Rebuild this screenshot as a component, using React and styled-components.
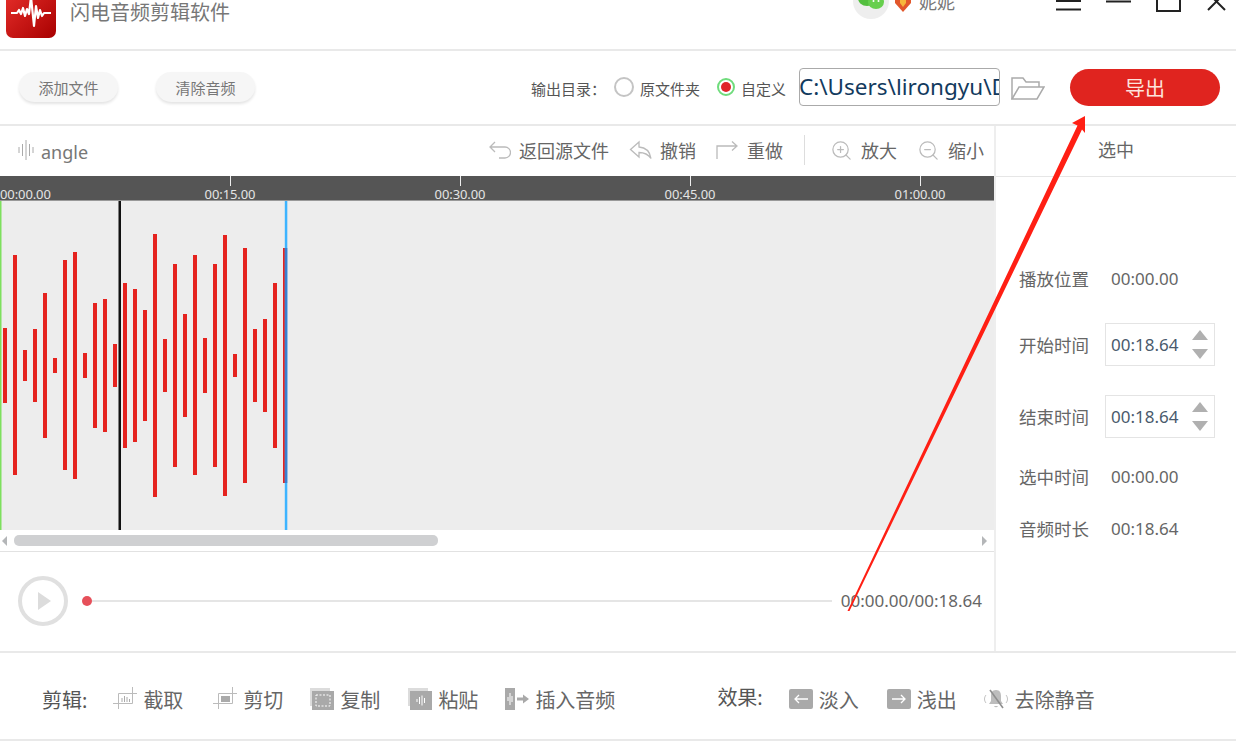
import React from 'react';
import styled, { createGlobalStyle } from 'styled-components';
import { ZoomIn, ZoomOut } from 'lucide-react';

const GlobalStyle = createGlobalStyle`
  html, body { margin: 0; padding: 0; background: #fff; }
  * { box-sizing: border-box; }
`;

const Page = styled.div`
  position: relative;
  width: 1236px;
  height: 742px;
  overflow: hidden;
  background: #fff;
  color: #666;
  font-family: "Noto Sans", "Noto Sans CJK SC", sans-serif;
`;

/* title bar */
const TitleBar = styled.header`
  display: flex;
  height: 51px;
  padding-left: 6px;
  border-bottom: 2px solid #e9e9e9;
  overflow: hidden;
`;
const Logo = styled.svg`
  flex: none;
  width: 50px;
  height: 50px;
  margin-top: -12px;
`;
const AppName = styled.div`
  margin-left: 14px;
  font-size: 20px;
  line-height: 26px;
  color: #777;
`;
const Avatar = styled.div`
  display: flex;
  align-items: flex-end;
  justify-content: center;
  flex: none;
  width: 36px;
  height: 36px;
  margin: -17px 0 0 auto;
  padding-bottom: 9px;
  border-radius: 50%;
  background: #eee;
`;
const UserName = styled.div`
  margin: -10px 0 0 7px;
  font-size: 18px;
  line-height: 24px;
  color: #777;
`;
const WindowControls = styled.div`
  display: flex;
  align-items: flex-start;
  gap: 25px;
  margin-left: 101px;
  padding-right: 9px;
`;
const Badge = styled.svg`
  flex: none;
  width: 18px;
  height: 12px;
  margin-left: 5px;
`;

/* toolbar */
const Toolbar = styled.section`
  display: flex;
  align-items: center;
  height: 75px;
  padding: 0 16px 1px 19px;
  border-bottom: 2px solid #e9e9e9;
`;
const PillButton = styled.button`
  width: 99px;
  height: 30px;
  margin-right: 38px;
  border: 0;
  border-radius: 15px;
  background: #f6f6f6;
  box-shadow: 0 2px 3px #e4e4e4;
  color: #777;
  font: inherit;
  font-size: 15px;
  padding: 0;
`;
const OutputGroup = styled.div`
  display: flex;
  align-items: center;
  margin-left: auto;
`;
const OutputLabel = styled.span`
  margin: 2px 8px 0 0;
  font-size: 15px;
  color: #555;
`;
const Radio = styled.span`
  display: flex;
  align-items: center;
  justify-content: center;
  flex: none;
  width: ${(p) => (p.$checked ? 18 : 20)}px;
  height: ${(p) => (p.$checked ? 18 : 20)}px;
  margin-right: 6px;
  border-radius: 50%;
  border: 2px solid ${(p) => (p.$checked ? '#6fdc7c' : '#c4c4c4')};
  &::after {
    content: '';
    display: ${(p) => (p.$checked ? 'block' : 'none')};
    width: 10px;
    height: 10px;
    border-radius: 50%;
    background: #e0242a;
  }
`;
const RadioLabel = styled.span`
  margin: 3px ${(p) => p.$gap}px 0 0;
  font-size: 15px;
  color: #555;
`;
const PathField = styled.div`
  width: 201px;
  height: 38px;
  border: 1px solid #aaa;
  border-radius: 4px;
  overflow: hidden;
  white-space: nowrap;
  text-indent: -1px;
  font-size: 22.5px;
  line-height: 36px;
  color: #123a5e;
`;
const FolderIcon = styled.svg`
  flex: none;
  width: 34px;
  height: 24px;
  margin: 2px 25px 0 11px;
`;
const ExportButton = styled.button`
  width: 150px;
  height: 37px;
  margin-top: 1px;
  border: 0;
  padding: 0;
  border-radius: 19px;
  background: #e0241f;
  color: #fde3dc;
  font: inherit;
  font-size: 20px;
`;

/* main */
const Main = styled.main`
  display: grid;
  grid-template-columns: 994px 1fr;
  height: 527px;
  border-bottom: 2px solid #e9e9e9;
`;
const Editor = styled.div`
  display: flex;
  flex-direction: column;
  min-width: 0;
`;
const EditorBar = styled.div`
  display: flex;
  align-items: center;
  height: 50px;
  padding: 0 10px 2px 18px;
`;
const TrackName = styled.span`
  margin: 4px 0 0 6px;
  font-size: 18px;
  color: #777;
`;
const EditorActions = styled.div`
  display: flex;
  align-items: center;
  gap: 20px;
  margin-left: auto;
`;
const EditorAction = styled.span`
  display: flex;
  align-items: center;
  gap: 8px;
  font-size: 18px;
  color: #666;
  white-space: nowrap;
  svg { flex: none; }
`;
const Divider = styled.span`
  width: 1px;
  height: 30px;
  margin: 0 5px 0 1px;
  background: #ddd;
`;

const Ruler = styled.div`
  display: flex;
  flex: none;
  height: 25px;
  background: #555;
  border-bottom: 1px solid #999;
  overflow: hidden;
`;
const RulerCell = styled.div`
  position: relative;
  flex: 0 0 ${(p) => (p.$first ? 115 : 230)}px;
  padding-top: 10px;
  text-align: ${(p) => (p.$first ? 'left' : 'center')};
  font-size: 13px;
  line-height: 17px;
  letter-spacing: -0.1px;
  color: #e4e4e4;
  &::before {
    content: '';
    display: ${(p) => (p.$first ? 'none' : 'block')};
    position: absolute;
    top: 0;
    left: 50%;
    width: 1px;
    height: 10px;
    background: #eee;
  }
`;
const Wave = styled.svg`
  display: block;
  flex: none;
  width: 994px;
  height: 329px;
  background: #ededed;
`;
const ScrollStrip = styled.div`
  display: flex;
  align-items: center;
  flex: none;
  height: 22px;
  padding: 0 7px 0 2px;
  border-bottom: 1px solid #e2e2e2;
`;
const ScrollArrow = styled.span`
  flex: none;
  width: 0;
  height: 0;
  border-top: 5px solid transparent;
  border-bottom: 5px solid transparent;
  ${(p) => (p.$dir === 'left' ? 'border-right: 5px solid #b4b6b8;' : 'border-left: 5px solid #b4b6b8; margin-left: auto;')}
`;
const ScrollThumb = styled.span`
  width: 424px;
  height: 11px;
  margin-left: 7px;
  border-radius: 5px;
  background: #cfd0d2;
`;
const Player = styled.div`
  display: flex;
  align-items: center;
  flex: 1;
  padding: 0 12px 2px 18px;
`;
const PlayButton = styled.span`
  display: flex;
  align-items: center;
  justify-content: center;
  flex: none;
  width: 50px;
  height: 50px;
  border: 4px solid #e0e0e0;
  border-radius: 50%;
  &::after {
    content: '';
    margin-left: 3px;
    border-left: 13px solid #dcdcdc;
    border-top: 9px solid transparent;
    border-bottom: 9px solid transparent;
  }
`;
const SeekDot = styled.span`
  flex: none;
  width: 10px;
  height: 10px;
  margin-left: 14px;
  border-radius: 50%;
  background: #e6505a;
`;
const SeekTrack = styled.span`
  flex: 1;
  height: 2px;
  background: #e5e5e5;
`;
const TimeText = styled.span`
  margin-left: 9px;
  font-size: 17px;
  color: #666;
  white-space: nowrap;
`;

/* side panel */
const Side = styled.aside`
  border-left: 2px solid #eee;
`;
const SideHead = styled.div`
  display: flex;
  align-items: center;
  justify-content: center;
  height: 51px;
  padding-bottom: 4px;
  border-bottom: 1px solid #e6e6e6;
  font-size: 18px;
  color: #666;
`;
const SideBody = styled.div`
  display: flex;
  flex-direction: column;
  padding: 81px 0 0 23px;
`;
const SideRow = styled.div`
  display: flex;
  align-items: center;
  height: ${(p) => p.$h}px;
  margin-top: ${(p) => p.$mt || 0}px;
`;
const SideLabel = styled.span`
  flex: 0 0 86px;
  font-size: 17.5px;
  color: #666;
`;
const SideValue = styled.span`
  padding-left: 6px;
  font-size: 17px;
  color: #666;
`;
const Stepper = styled.div`
  display: flex;
  align-items: center;
  width: 110px;
  height: 100%;
  padding: 0 6px 0 5px;
  border: 1px solid #e4e4e4;
  font-size: 17px;
  color: #4a5a6c;
`;
const StepArrows = styled.span`
  display: flex;
  flex-direction: column;
  gap: 9px;
  margin-left: auto;
`;
const StepArrow = styled.span`
  width: 0;
  height: 0;
  border-left: 8px solid transparent;
  border-right: 8px solid transparent;
  ${(p) => (p.$up ? 'border-bottom: 10px solid #b0b0b0;' : 'border-top: 10px solid #b0b0b0;')}
`;

/* bottom bar */
const EditBar = styled.footer`
  display: flex;
  align-items: center;
  height: 88px;
  padding: 6px 0 0 42px;
  border-bottom: 2px solid #e9e9e9;
  gap: 28px;
  font-size: 20px;
  color: #666;
`;
const EditLabel = styled.span`
  margin-left: ${(p) => p.$ml || 0}px;
  margin-right: -2px;
  margin-bottom: ${(p) => p.$up || 0}px;
  color: #555;
  white-space: nowrap;
`;
const EditItem = styled.span`
  display: flex;
  align-items: center;
  gap: 6px;
  margin-left: ${(p) => p.$ml || 0}px;
  white-space: nowrap;
  svg { flex: none; }
`;
const ArrowOverlay = styled.svg`
  position: absolute;
  inset: 0;
  width: 1236px;
  height: 742px;
  pointer-events: none;
`;

const Icon = ({ w = 24, h = 24, children }) => (
  <svg width={w} height={h} viewBox={`0 0 ${w} ${h}`} fill="none">{children}</svg>
);

const bars = [
  [328, 403], [255, 475], [350, 381], [329, 402], [293, 438], [358, 373], [260, 470], [252, 479],
  [353, 378], [303, 428], [299, 432], [344, 387], [283, 448], [289, 442], [310, 421], [234, 497],
  [339, 392], [264, 467], [314, 417], [255, 475], [338, 393], [264, 467], [235, 496], [354, 377],
  [248, 483], [329, 402], [319, 412], [283, 448], [248, 483],
];

const Waveform = () => (
  <Wave viewBox="0 0 994 329">
    {bars.map(([top, bottom], i) => (
      <rect key={i} x={3 + i * 10} y={top - 201} width="4" height={bottom - top} fill="#e5231f" />
    ))}
    <rect x="0" y="0" width="1.5" height="329" fill="#7ee05e" />
    <rect x="118.5" y="0" width="2.5" height="329" fill="#111" />
    <rect x="284.8" y="0" width="2.5" height="329" fill="#3db4ff" />
    <rect x="284.8" y="47" width="2.5" height="235" fill="#3a80cf" />
  </Wave>
);

const CropIcon = ({ filled }) => (
  <Icon>
    <path d="M0 16.500H19.500V0M5.500 22V6.500H24" stroke="#bbb" />
    {filled
      ? <rect x="8" y="9" width="9" height="6" fill="#aaa" />
      : <path d="M9 15v-4M11.500 15v-6M14 15v-5M16.500 15v-3" stroke="#aaa" />}
  </Icon>
);

const CopyIcon = () => (
  <Icon>
    <rect x="0" y="1" width="20" height="18" fill="#dcdcdc" />
    <rect x="2" y="4" width="22" height="19" fill="#a9a9a9" />
    <rect x="6" y="8" width="14" height="11" stroke="#fff" strokeDasharray="2 1.5" />
  </Icon>
);

const PasteIcon = () => (
  <Icon>
    <rect x="0" y="1" width="20" height="18" fill="#dcdcdc" />
    <rect x="2" y="4" width="22" height="19" fill="#a9a9a9" />
    <path d="M9 12v3M11.500 10v7M14 8.500v10M16.500 11v5" stroke="#fff" />
  </Icon>
);

const InsertIcon = () => (
  <Icon>
    <rect x="0" y="1" width="10" height="22" fill="#a9a9a9" />
    <path d="M3 10v4M5 6v12M7 9v6" stroke="#fff" />
    <path d="M12 12h7" stroke="#a9a9a9" strokeWidth="3" />
    <path d="M18 7.500l6 4.500-6 4.500z" fill="#a9a9a9" />
  </Icon>
);

const FadeIcon = ({ dir }) => (
  <Icon>
    <rect x="0" y="2" width="24" height="20" rx="2" fill="#a9a9a9" />
    <path d={dir === 'in' ? 'M19 12H6M10 8l-4 4 4 4' : 'M5 12h13M14 8l4 4-4 4'} stroke="#fff" strokeWidth="1.3" />
  </Icon>
);

const MuteIcon = () => (
  <Icon w={26}>
    <path d="M13 3c-4 0-5 3-5 6v5l-2 3h14l-2-3V9c0-3-1-6-5-6z" fill="#bdbdbd" />
    <path d="M11 19a2.200 2.200 0 0 0 4 0z" fill="#bdbdbd" />
    <path d="M7 3l13 18" stroke="#8f8f8f" strokeWidth="1.6" />
    <path d="M3 8c-2 2.500-2 5.500 0 8M23 8c2 2.500 2 5.500 0 8" stroke="#c4c4c4" />
  </Icon>
);

export default function App() {
  const ticks = ['00:15.00', '00:30.00', '00:45.00', '01:00.00'];
  return (
    <Page>
      <GlobalStyle />
      <TitleBar>
        <Logo viewBox="0 0 50 50">
          <defs>
            <linearGradient id="logoRed" x1="0" y1="0" x2="1" y2="1">
              <stop offset="0" stopColor="#e8302c" />
              <stop offset="1" stopColor="#a80000" />
            </linearGradient>
          </defs>
          <rect width="50" height="50" rx="7" fill="url(#logoRed)" />
          <path d="M5 25h6l2-3 2 4 2-6 2 8 2-7 2 5 2-17 3 29 2-20 2 12 2-8 2 6 2-3h7" stroke="#fff" strokeWidth="2.2" fill="none" strokeLinejoin="round" />
        </Logo>
        <AppName>闪电音频剪辑软件</AppName>
        <Avatar>
          <svg width="26" height="20" viewBox="0 0 26 20">
            <ellipse cx="9" cy="8" rx="9" ry="8" fill="#54bf3f" />
            <ellipse cx="18" cy="12" rx="8" ry="7" fill="#67cf4e" />
            <circle cx="15.500" cy="11" r="1" fill="#fff" />
            <circle cx="20.500" cy="11" r="1" fill="#fff" />
          </svg>
        </Avatar>
        <Badge viewBox="0 0 18 12">
          <path d="M1 0h16v3L9 12 1 3z" fill="#e2572b" />
          <path d="M6 0h6v3L9 7 6 3z" fill="#f6b73c" />
        </Badge>
        <UserName>妮妮</UserName>
        <WindowControls>
          <svg width="25" height="11" viewBox="0 0 25 11"><path d="M0 1h25M0 9.500h25" stroke="#222" strokeWidth="2" /></svg>
          <svg width="25" height="3" viewBox="0 0 25 3"><path d="M0 1.500h25" stroke="#222" strokeWidth="2" /></svg>
          <svg width="25" height="12" viewBox="0 0 25 12"><path d="M1 0v11h23V0" stroke="#222" strokeWidth="2" fill="none" /></svg>
          <svg width="21" height="11" viewBox="0 0 21 11"><path d="M1 -8L19 10M20 -8L2 10" stroke="#222" strokeWidth="2" /></svg>
        </WindowControls>
      </TitleBar>

      <Toolbar>
        <PillButton>添加文件</PillButton>
        <PillButton>清除音频</PillButton>
        <OutputGroup>
          <OutputLabel>输出目录：</OutputLabel>
          <Radio />
          <RadioLabel $gap={17}>原文件夹</RadioLabel>
          <Radio $checked />
          <RadioLabel $gap={13}>自定义</RadioLabel>
          <PathField>C:\Users\lirongyu\Desktop</PathField>
          <FolderIcon viewBox="0 0 34 24" fill="none" stroke="#aaa" strokeWidth="1.5">
            <path d="M1 23V2h11l3 4h13v5" />
            <path d="M1 23l7-12h25l-7 12z" />
          </FolderIcon>
          <ExportButton>导出</ExportButton>
        </OutputGroup>
      </Toolbar>

      <Main>
        <Editor>
          <EditorBar>
            <Icon w={17} h={24}>
              <path d="M1 9v6M4.500 6v12M8 2v20M11.500 6v12M15 9v6" stroke="#aaa" />
            </Icon>
            <TrackName>angle</TrackName>
            <EditorActions>
              <EditorAction>
                <Icon w={23} h={20}>
                  <path d="M7 2L2 7l5 5M2 7h15a5.500 5.500 0 0 1 0 11h-6" stroke="#bbb" strokeWidth="1.300" />
                </Icon>
                返回源文件
              </EditorAction>
              <EditorAction>
                <Icon w={23} h={20}>
                  <path d="M10 2L1.500 9.500 10 17v-4.500c5 0 9 1.500 12 6-1-6.500-5-11-12-11.500z" stroke="#bbb" strokeWidth="1.300" />
                </Icon>
                撤销
              </EditorAction>
              <EditorAction>
                <Icon w={23} h={20}>
                  <path d="M1 19V6h19M16 1.500L21 6l-5 4.500" stroke="#bbb" strokeWidth="1.300" />
                </Icon>
                重做
              </EditorAction>
              <Divider />
              <EditorAction>
                <ZoomIn size={23} color="#bbb" strokeWidth={1.300} />
                放大
              </EditorAction>
              <EditorAction>
                <ZoomOut size={23} color="#bbb" strokeWidth={1.300} />
                缩小
              </EditorAction>
            </EditorActions>
          </EditorBar>
          <Ruler>
            <RulerCell $first>00:00.00</RulerCell>
            {ticks.map((t) => <RulerCell key={t}>{t}</RulerCell>)}
          </Ruler>
          <Waveform />
          <ScrollStrip>
            <ScrollArrow $dir="left" />
            <ScrollThumb />
            <ScrollArrow $dir="right" />
          </ScrollStrip>
          <Player>
            <PlayButton />
            <SeekDot />
            <SeekTrack />
            <TimeText>00:00.00/00:18.64</TimeText>
          </Player>
        </Editor>

        <Side>
          <SideHead>选中</SideHead>
          <SideBody>
            <SideRow $h={40}>
              <SideLabel>播放位置</SideLabel>
              <SideValue>00:00.00</SideValue>
            </SideRow>
            <SideRow $h={43} $mt={25}>
              <SideLabel>开始时间</SideLabel>
              <Stepper>
                00:18.64
                <StepArrows><StepArrow $up /><StepArrow /></StepArrows>
              </Stepper>
            </SideRow>
            <SideRow $h={43} $mt={29}>
              <SideLabel>结束时间</SideLabel>
              <Stepper>
                00:18.64
                <StepArrows><StepArrow $up /><StepArrow /></StepArrows>
              </Stepper>
            </SideRow>
            <SideRow $h={40} $mt={18}>
              <SideLabel>选中时间</SideLabel>
              <SideValue>00:00.00</SideValue>
            </SideRow>
            <SideRow $h={40} $mt={12}>
              <SideLabel>音频时长</SideLabel>
              <SideValue>00:18.64</SideValue>
            </SideRow>
          </SideBody>
        </Side>
      </Main>

      <EditBar>
        <EditLabel>剪辑:</EditLabel>
        <EditItem><CropIcon />截取</EditItem>
        <EditItem $ml={2}><CropIcon filled />剪切</EditItem>
        <EditItem $ml={-1}><CopyIcon />复制</EditItem>
        <EditItem><PasteIcon />粘贴</EditItem>
        <EditItem $ml={-1}><InsertIcon />插入音频</EditItem>
        <EditLabel $ml={74} $up={6}>效果:</EditLabel>
        <EditItem><FadeIcon dir="in" />淡入</EditItem>
        <EditItem><FadeIcon dir="out" />浅出</EditItem>
        <EditItem $ml={-2}><MuteIcon />去除静音</EditItem>
      </EditBar>

      <ArrowOverlay viewBox="0 0 1236 742">
        <polygon points="1085,116 1085,133 1082,129.500 849.500,611 847.500,611 1077.500,125.500 1072,123" fill="#ff1f14" />
      </ArrowOverlay>
    </Page>
  );
}
